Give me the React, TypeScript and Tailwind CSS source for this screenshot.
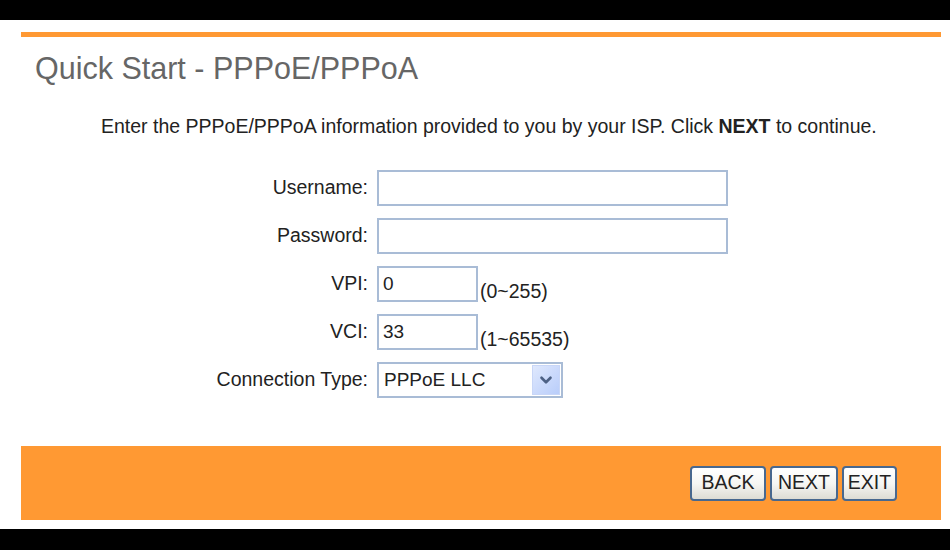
import { ChevronDown } from "lucide-react";

const font = { fontFamily: '"Liberation Sans", Arial, sans-serif' };

function Field({ label, children }: { label: string; children: React.ReactNode }) {
  return (
    <>
      <div className="h-[36px] flex items-center justify-end text-[19.5px] text-[#222]">
        {label}
      </div>
      <div className="h-[36px] flex items-end">{children}</div>
    </>
  );
}

function TextBox({ value = "", width }: { value?: string; width: string }) {
  return (
    <div
      className={`${width} h-[36px] border-2 border-[#a9bcd6] bg-white flex items-center px-[4px] text-[19px] text-[#222]`}
    >
      {value}
    </div>
  );
}

function XpButton({ label, width }: { label: string; width: string }) {
  return (
    <button
      type="button"
      className={`${width} h-[35px] rounded-[4px] border-2 border-[#48688f] bg-gradient-to-b from-white via-[#f6f6f3] to-[#dedcd4] text-[19.5px] text-[#222] flex items-center justify-center`}
    >
      {label}
    </button>
  );
}

export default function App() {
  return (
    <div className="w-[950px] h-[550px] bg-white flex flex-col" style={font}>
      <div className="h-[20px] bg-black" />

      <div className="flex-1 pl-[21px] pr-[9px] pt-[12px] flex flex-col">
        <div className="h-[5px] bg-[#ff9933]" />

        {/* Title */}
        <div className="mt-[13px] pl-[14px] h-[36px] leading-[36px] text-[30.5px] text-[#666]">
          Quick Start - PPPoE/PPPoA
        </div>

        {/* Intro */}
        <div className="mt-[28px] pl-[80px] text-[19.5px] leading-[24px] text-[#222]">
          Enter the PPPoE/PPPoA information provided to you by your ISP. Click{" "}
          <b>NEXT</b> to continue.
        </div>

        {/* Form */}
        <div className="mt-[32px] grid grid-cols-[347px_auto] gap-x-[9px] gap-y-[12px]">
          <Field label="Username:">
            <TextBox width="w-[351px]" />
          </Field>
          <Field label="Password:">
            <TextBox width="w-[351px]" />
          </Field>
          <Field label="VPI:">
            <TextBox width="w-[101px]" value="0" />
            <span className="ml-[2px] text-[19.5px] leading-[22px] text-[#222]">(0~255)</span>
          </Field>
          <Field label="VCI:">
            <TextBox width="w-[101px]" value="33" />
            <span className="ml-[2px] text-[19.5px] leading-[22px] text-[#222]">(1~65535)</span>
          </Field>
          <Field label="Connection Type:">
            <div className="w-[186px] h-[36px] border-2 border-[#a9bcd6] bg-white flex items-center justify-between pl-[5px] pr-[1px] text-[19px] text-[#222]">
              <span>PPPoE LLC</span>
              <span className="w-[28px] h-[30px] bg-gradient-to-br from-[#dfe8fd] to-[#b9cdfa] border border-[#c8d6f7] flex items-center justify-center">
                <ChevronDown className="w-[18px] h-[18px] text-[#4d6185]" strokeWidth={3.5} />
              </span>
            </div>
          </Field>
        </div>

        <div className="flex-1" />

        {/* Footer */}
        <div className="h-[74px] bg-[#ff9933] flex items-center justify-end gap-[4px] pr-[44px] mb-[9px]">
          <XpButton label="BACK" width="w-[76px]" />
          <XpButton label="NEXT" width="w-[68px]" />
          <XpButton label="EXIT" width="w-[55px]" />
        </div>
      </div>

      <div className="h-[21px] bg-black" />
    </div>
  );
}
